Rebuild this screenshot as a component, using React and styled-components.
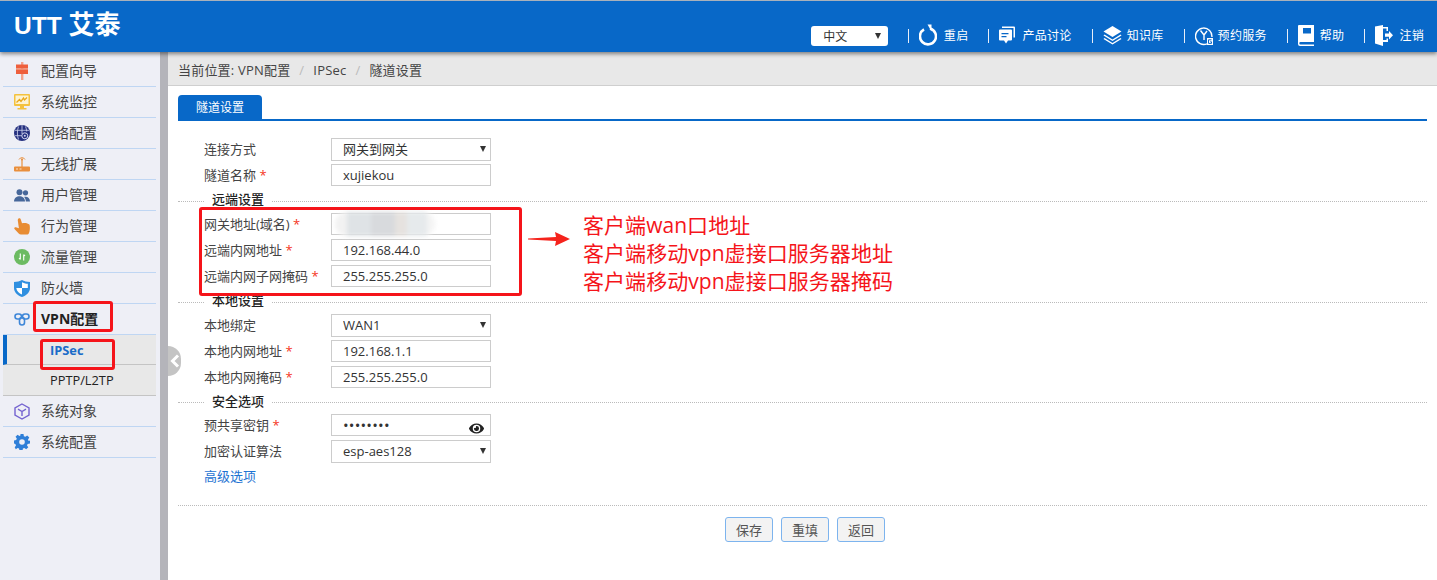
import React from 'react';
import styled, { createGlobalStyle } from 'styled-components';
import { FaEye } from 'react-icons/fa';

const GlobalStyle = createGlobalStyle`
  html, body {
    margin: 0;
    padding: 0;
    background: #fff;
    font-family: "Open Sans", "Noto Sans CJK SC", sans-serif;
    font-size: 13px;
    color: #333;
  }
`;

const RestartIcon = () => (
  <svg width="18" height="22" viewBox="0 0 18 22" fill="none">
    <path d="M5 5.400A8 8 0 1 0 11 4.600" stroke="#fff" strokeWidth="2.600" />
    <path d="M8.500 .5 L12.500 .5 L12.500 7.500 Z" fill="#fff" />
  </svg>
);

const ChatIcon = () => (
  <svg width="16" height="20" viewBox="0 0 16 20">
    <path d="M3 1.500h12a1 1 0 0 1 1 1v10h-1.500v-9.500H3z" fill="#fff" />
    <path d="M1 4.500h11a1 1 0 0 1 1 1v9a1 1 0 0 1-1 1H9l-2 3-2-3H1a1 1 0 0 1-1-1v-9a1 1 0 0 1 1-1z" fill="#fff" />
    <path d="M2.500 8h7v1.300h-7zM2.500 11h5v1.300h-5z" fill="#0868c8" />
  </svg>
);

const BooksIcon = () => (
  <svg width="19" height="20" viewBox="0 0 19 20">
    <path d="M9.500 1L18.500 6.500L9.500 12L.5 6.500z" fill="#fff" />
    <path d="M1.500 9.500L9.500 14.500L17.500 9.500L18.500 10.500L9.500 16L.5 10.500z" fill="#fff" />
    <path d="M1.500 13L9.500 18L17.500 13L18.500 14L9.500 19.500L.5 14z" fill="#fff" />
  </svg>
);

const ServiceIcon = () => (
  <svg width="18" height="21" viewBox="0 0 18 21" fill="none">
    <path d="M12 18.800A8.200 8.200 0 1 1 16.900 12" stroke="#fff" strokeWidth="1.400" />
    <path d="M5.500 5.500L9 10l3-4M9 10v5" stroke="#fff" strokeWidth="1.400" />
    <path d="M12 13h6v7h-6z" fill="#fff" />
    <path d="M16.500 14.800h-3v3.600h3v-1.600h-1.300" stroke="#0868c8" strokeWidth="1" />
  </svg>
);

const HelpIcon = () => (
  <svg width="16" height="21" viewBox="0 0 16 21">
    <path d="M1 0h15v17H2.500a1 1 0 0 0 0 2.400H16V21H2a2 2 0 0 1-2-2V1a1 1 0 0 1 1-1z" fill="#fff" />
    <path d="M5 3h8v5.500H5z" fill="#0868c8" />
  </svg>
);

const LogoutIcon = () => (
  <svg width="18" height="21" viewBox="0 0 18 21">
    <path d="M0 1.500L8 0v21L0 18.500z" fill="#fff" />
    <path d="M8 2h5v4h-1.500V3.500H8zM8 15h3.500v-1.500H13V17H8z" fill="#fff" />
    <path d="M10 8.500h4V6l4 4.200-4 4.200v-2.600h-4z" fill="#fff" />
  </svg>
);

const GuideIcon = () => (
  <svg width="16" height="18" viewBox="0 0 16 18">
    <path d="M7 0h2.400v18H7z" fill="#f3a28c" />
    <path d="M2 2.500h12v4H2zM2 8h12v4H2z" fill="#ee5f3c" />
    <path d="M2 6.500h12V8H2z" fill="#f08c70" />
  </svg>
);

const MonitorIcon = () => (
  <svg width="16" height="16" viewBox="0 0 16 16">
    <path d="M1 0h14a1 1 0 0 1 1 1v10a1 1 0 0 1-1 1H1a1 1 0 0 1-1-1V1a1 1 0 0 1 1-1z" fill="#f4c23f" />
    <path d="M1.500 1.500h13v8.500h-13z" fill="#fdf3d2" />
    <path d="M2.500 8.500L5.500 5.500l1.500 2 2.500-3.500 1 2 2.500-2.500" fill="none" stroke="#e9a81b" strokeWidth="1.300" />
    <path d="M6 12h4v2h2.500v1.500h-9V14H6z" fill="#f4c23f" />
  </svg>
);

const GlobeIcon = () => (
  <svg width="16" height="16" viewBox="0 0 16 16">
    <circle cx="8" cy="8" r="8" fill="#25307f" />
    <path d="M1 5.300h14M1 10.700h8M8 0v9M4.500 1.500c-1.500 4-1.500 9 0 13M11.500 1.500c.7 1.500 1 3 1.200 5" fill="none" stroke="#cfd4ee" strokeWidth=".8" />
    <circle cx="10.800" cy="10.800" r="3" fill="#25307f" stroke="#cfd4ee" strokeWidth="1" />
    <circle cx="10.800" cy="10.800" r="1" fill="#cfd4ee" />
  </svg>
);

const RouterIcon = () => (
  <svg width="16" height="16" viewBox="0 0 16 16">
    <path d="M7.400 3h1.200v8H7.400z" fill="#e98f3d" />
    <path d="M5 3.500a3.400 3.400 0 0 1 6 0" fill="none" stroke="#e98f3d" strokeWidth="1" />
    <circle cx="8" cy="3.500" r="1" fill="#e98f3d" />
    <path d="M1 10.500h14a1 1 0 0 1 1 1v3a1 1 0 0 1-1 1H1a1 1 0 0 1-1-1v-3a1 1 0 0 1 1-1z" fill="#e98f3d" />
    <path d="M2 12.500h2v1H2zM5.500 12.500h2v1h-2z" fill="#fbe3c8" />
  </svg>
);

const UsersIcon = () => (
  <svg width="16" height="13" viewBox="0 0 16 13">
    <circle cx="5.500" cy="3.300" r="3" fill="#47679a" />
    <circle cx="11.500" cy="3.800" r="2.600" fill="#47679a" />
    <path d="M0 12.500c0-7 11-7 11 0z" fill="#47679a" />
    <path d="M11.800 12.500h4.200c0-3.800-3-5.400-6-4.500 1.200 1 1.800 2.600 1.800 4.500z" fill="#47679a" />
  </svg>
);

const HandIcon = () => (
  <svg width="16" height="17" viewBox="0 0 16 17">
    <path d="M4.500.5c1 -.6 2 0 2.300 1L8 5.300c2-.8 6-.5 7.300 1.200.9 1.400.7 6 -.3 8.500-.4 1-1.200 1.500-2.200 1.500H7c-1 0-1.700-.3-2.300-1L.5 11c-.7-.8.3-2 1.400-1.700l3 1L3.800 2.400c-.1-.8.100-1.500.7-1.900z" fill="#e88c33" />
  </svg>
);

const FlowIcon = () => (
  <svg width="16" height="16" viewBox="0 0 16 16">
    <circle cx="8" cy="8" r="8" fill="#6cbb62" />
    <path d="M6.300 4.500v6M6.300 10.500l-1.300-1.500M9.700 11.500v-6M9.700 5.500l1.300 1.500" stroke="#fff" strokeWidth="1.100" fill="none" />
  </svg>
);

const ShieldIcon = () => (
  <svg width="16" height="17" viewBox="0 0 16 17">
    <path d="M8 0c2 1.300 5 2 8 2v6c0 4.500-4 7.700-8 9-4-1.300-8-4.500-8-9V2c3 0 6-.7 8-2z" fill="#2f8fe0" />
    <path d="M8 2.200c1.500.9 3.500 1.400 5.800 1.600V8H8zM8 8v6.600C5.200 13.500 2.600 11.200 2.300 8z" fill="#fff" />
  </svg>
);

const VpnIcon = () => (
  <svg width="16" height="13" viewBox="0 0 16 13" fill="none" stroke="#3e86d8" strokeWidth="1.600">
    <rect x="1" y="1" width="6.500" height="5" rx="2.500" />
    <rect x="8.500" y="1" width="6.500" height="5" rx="2.500" />
    <rect x="5.500" y="4.500" width="5" height="7.500" rx="2.500" />
  </svg>
);

const CubeIcon = () => (
  <svg width="16" height="17" viewBox="0 0 16 17" fill="none" stroke="#7463d0" strokeWidth="1.400">
    <path d="M8 1l7 3.800v7.400L8 16l-7-3.800V4.800z" />
    <path d="M4 6.200L8 8.500l4-2.300M8 8.500V13" />
  </svg>
);

const GearIcon = () => (
  <svg width="16" height="16" viewBox="0 0 16 16">
    <path
      d="M6.500 0h3l.4 2.200 1.500.6 1.800-1.300 2.100 2.100-1.300 1.800.6 1.500L16 6.500v3l-2.400.4-.6 1.500 1.300 1.800-2.100 2.100-1.800-1.300-1.500.6-.4 2.400h-3l-.4-2.400-1.500-.6-1.800 1.300L.7 13.200 2 11.400l-.6-1.500L0 9.500v-3l2.200-.4.600-1.500L1.500 2.800 3.600.7l1.800 1.300 1-.4z"
      fill="#2f7fd8"
    />
    <circle cx="8" cy="8" r="2.800" fill="#eeeff6" />
  </svg>
);

const menu = [
  { label: '配置向导', icon: <GuideIcon /> },
  { label: '系统监控', icon: <MonitorIcon /> },
  { label: '网络配置', icon: <GlobeIcon /> },
  { label: '无线扩展', icon: <RouterIcon /> },
  { label: '用户管理', icon: <UsersIcon /> },
  { label: '行为管理', icon: <HandIcon /> },
  { label: '流量管理', icon: <FlowIcon /> },
  { label: '防火墙', icon: <ShieldIcon /> },
  { label: 'VPN配置', icon: <VpnIcon />, active: true },
];

const navItems = [
  { label: '重启', icon: <RestartIcon />, gap: 6.5 },
  { label: '产品讨论', icon: <ChatIcon />, gap: 7 },
  { label: '知识库', icon: <BooksIcon /> },
  { label: '预约服务', icon: <ServiceIcon /> },
  { label: '帮助', icon: <HelpIcon />, gap: 6 },
  { label: '注销', icon: <LogoutIcon />, gap: 6 },
];

const Field = ({ label, required, children }) => (
  <Row>
    <Label>
      {label}
      {required && <Star> *</Star>}
    </Label>
    {children}
  </Row>
);

const Select = ({ value }) => (
  <SelectWrap>
    <SelectBox defaultValue={value}>
      <option>{value}</option>
    </SelectBox>
  </SelectWrap>
);

const App = () => {
  return (
    <Page>
      <GlobalStyle />
      <Header>
        <Logo>UTT <LogoCn>艾泰</LogoCn></Logo>
        <HeaderNav>
          <LangWrap>
            <LangSelect defaultValue="中文">
              <option>中文</option>
            </LangSelect>
          </LangWrap>
          {navItems.map((item) => (
            <NavItem key={item.label} $gap={item.gap}>
              {item.icon}
              <span>{item.label}</span>
            </NavItem>
          ))}
        </HeaderNav>
      </Header>

      <Body>
        <Sidebar>
          {menu.map((item) => (
            <MenuItem key={item.label} $active={item.active}>
              <MenuIcon>{item.icon}</MenuIcon>
              {item.label}
            </MenuItem>
          ))}
          <SubItem $active>IPSec</SubItem>
          <SubItem>PPTP/L2TP</SubItem>
          <MenuItem>
            <MenuIcon><CubeIcon /></MenuIcon>
            系统对象
          </MenuItem>
          <MenuItem>
            <MenuIcon><GearIcon /></MenuIcon>
            系统配置
          </MenuItem>
        </Sidebar>
        <Gutter>
          <Collapse>
            <svg width="10" height="14" viewBox="0 0 10 14" fill="none">
              <path d="M8 1.500L2.500 7 8 12.500" stroke="#fff" strokeWidth="3" />
            </svg>
          </Collapse>
        </Gutter>

        <Main>
          <Breadcrumb>
            <span>当前位置: VPN配置</span>
            <Sep>/</Sep>
            <span>IPSec</span>
            <Sep>/</Sep>
            <span>隧道设置</span>
          </Breadcrumb>
          <Content>
            <Tabs>
              <Tab>隧道设置</Tab>
            </Tabs>
            <Form>
              <Field label="连接方式"><Select value="网关到网关" /></Field>
              <Field label="隧道名称" required><Input defaultValue="xujiekou" /></Field>

              <Legend><span>远端设置</span></Legend>
              <Field label="网关地址(域名)" required>
                <InputWrap>
                  <Input defaultValue="" />
                  <Blur />
                </InputWrap>
              </Field>
              <Field label="远端内网地址" required><Input defaultValue="192.168.44.0" /></Field>
              <Field label="远端内网子网掩码" required><Input defaultValue="255.255.255.0" /></Field>

              <Legend><span>本地设置</span></Legend>
              <Field label="本地绑定"><Select value="WAN1" /></Field>
              <Field label="本地内网地址" required><Input defaultValue="192.168.1.1" /></Field>
              <Field label="本地内网掩码" required><Input defaultValue="255.255.255.0" /></Field>

              <Legend $height={22}><span>安全选项</span></Legend>
              <Field label="预共享密钥" required>
                <InputWrap>
                  <Input type="password" defaultValue="12345678" />
                  <Eye><FaEye size={15} /></Eye>
                </InputWrap>
              </Field>
              <Field label="加密认证算法"><Select value="esp-aes128" /></Field>
              <AdvancedLink>高级选项</AdvancedLink>
            </Form>
            <Footer>
              <Button>保存</Button>
              <Button>重填</Button>
              <Button>返回</Button>
            </Footer>
          </Content>
        </Main>
      </Body>

      <RedBox $x={33} $y={301} $w={80} $h={31} />
      <RedBox $x={40} $y={339} $w={75} $h={31} />
      <RedBox $x={199} $y={207} $w={323} $h={89} />
      <Arrow viewBox="0 0 42 14" width="42" height="14">
        <path d="M0 6.500L28 5 27 0 42 7 27 14 28 9 0 7.500z" fill="#f5231c" />
      </Arrow>
      <Note>
        <div>客户端wan口地址</div>
        <div>客户端移动vpn虚接口服务器地址</div>
        <div>客户端移动vpn虚接口服务器掩码</div>
      </Note>
    </Page>
  );
};

const Page = styled.div`
  position: relative;
  height: 580px;
  overflow: hidden;
  display: flex;
  flex-direction: column;
`;

const Header = styled.header`
  position: relative;
  z-index: 2;
  flex: none;
  box-sizing: border-box;
  height: 52px;
  border-top: 1px solid #a9b1bb;
  padding: 0 13px 0 14px;
  display: flex;
  justify-content: space-between;
  background: #0868c8;
  box-shadow: 0 2px 4px rgba(0, 0, 0, 0.45);
`;

const Logo = styled.div`
  margin-top: 8px;
  font-family: "Liberation Sans", "Noto Sans CJK SC", sans-serif;
  font-size: 24.500px;
  line-height: 32px;
  font-weight: 700;
  color: #fff;
`;

const LogoCn = styled.span`
  font-size: 26px;
`;

const HeaderNav = styled.nav`
  margin-top: 21px;
  display: flex;
  align-items: center;
  gap: 20px;
  height: 26px;
  color: #fff;
  font-size: 12px;
  letter-spacing: 0.3px;
`;

const LangWrap = styled.div`
  position: relative;
  width: 77px;
  height: 20px;
  margin-top: 2px;

  &::after {
    content: '';
    position: absolute;
    right: 7px;
    top: 7px;
    border: 3.5px solid transparent;
    border-top: 6px solid #333;
    border-bottom: 0;
  }
`;

const LangSelect = styled.select`
  appearance: none;
  width: 100%;
  height: 100%;
  border: 0;
  border-radius: 3px;
  padding: 0 0 0 12px;
  background: #fff;
  color: #333;
  font: inherit;
`;

const NavItem = styled.div`
  display: flex;
  align-items: center;
  gap: ${(p) => p.$gap || 5}px;
  padding-left: 11px;
  height: 22px;
  position: relative;

  &::before {
    content: '';
    position: absolute;
    left: 0;
    top: 5px;
    height: 14px;
    border-left: 1px solid #e8eef8;
  }
`;

const Body = styled.div`
  flex: 1;
  display: flex;
  min-height: 0;
  padding-top: 4px;
  background: #e8e8e8;
`;

const Sidebar = styled.aside`
  flex: none;
  box-sizing: border-box;
  width: 160px;
  margin-top: -4px;
  padding: 4px 4px 0 3px;
  background: #eeeff6;
`;

const MenuItem = styled.div`
  box-sizing: border-box;
  height: 31px;
  padding-bottom: 2px;
  display: flex;
  align-items: center;
  border-bottom: 1px solid #bfd6f3;
  font-size: 14px;
  font-weight: ${(p) => (p.$active ? 700 : 400)};
  color: ${(p) => (p.$active ? '#222' : '#444')};
`;

const MenuIcon = styled.span`
  flex: none;
  display: flex;
  justify-content: center;
  width: 16px;
  margin: 2px 11px 0;
`;

const SubItem = styled.div`
  box-sizing: border-box;
  height: ${(p) => (p.$active ? 30 : 31)}px;
  padding-left: ${(p) => (p.$active ? 43 : 47)}px;
  padding-top: ${(p) => (p.$active ? 1 : 0)}px;
  display: flex;
  align-items: center;
  background: #e8e8e8;
  border-left: ${(p) => (p.$active ? '4px solid #0868c8' : '0')};
  border-bottom: 1px solid #c4c4c4;
  font-size: 12.800px;
  font-weight: ${(p) => (p.$active ? 700 : 400)};
  color: ${(p) => (p.$active ? '#1a6cc8' : '#222')};
`;

const Gutter = styled.div`
  position: relative;
  z-index: 1;
  flex: none;
  width: 8px;
  margin-top: -4px;
  background: #b4b4ba;
`;

const Collapse = styled.div`
  position: absolute;
  left: 8px;
  top: 294px;
  width: 13px;
  height: 30px;
  display: flex;
  align-items: center;
  justify-content: center;
  border-radius: 0 15px 15px 0;
  background: #c4c4c4;
`;

const Main = styled.main`
  flex: 1;
  min-width: 0;
  display: flex;
  flex-direction: column;
  background: #fff;
`;

const Breadcrumb = styled.div`
  flex: none;
  box-sizing: border-box;
  height: 30px;
  padding: 0 0 2px 10px;
  display: flex;
  align-items: center;
  background: #e8e8e8;
  border-bottom: 1px solid #cfcfcf;
  color: #444;
  letter-spacing: 0.2px;
`;

const Sep = styled.span`
  margin: 0 9px;
  color: #bbb;
`;

const Content = styled.div`
  flex: 1;
  padding: 9px 10px 0;
`;

const Tabs = styled.div`
  display: flex;
  height: 26px;
  box-sizing: border-box;
  border-bottom: 2px solid #0868c8;
`;

const Tab = styled.div`
  width: 84px;
  height: 24px;
  display: flex;
  align-items: center;
  justify-content: center;
  border-radius: 4px 4px 0 0;
  background: #0868c8;
  color: #fff;
  font-size: 12px;
`;

const Form = styled.form`
  padding-top: 15px;
  height: 385px;
  box-sizing: border-box;
  border-bottom: 1px dotted #bbb;
`;

const Row = styled.div`
  height: 26px;
  padding-left: 26px;
  display: flex;
  align-items: center;
`;

const Label = styled.label`
  flex: none;
  width: 127px;
  padding-bottom: 2px;
  color: #444;
`;

const Star = styled.span`
  color: #f5341c;
`;

const Input = styled.input`
  box-sizing: border-box;
  width: 160px;
  height: 22px;
  padding: 0 11px;
  border: 1px solid #ccc;
  outline: none;
  background: #fff;
  color: #333;
  font: inherit;

  &[type='password'] {
    font-size: 15px;
    letter-spacing: 0.2px;
  }
`;

const InputWrap = styled.div`
  position: relative;
  display: flex;
`;

const Blur = styled.div`
  position: absolute;
  left: 4px;
  top: -1px;
  width: 100px;
  height: 24px;
  border-radius: 12px;
  background: linear-gradient(90deg, #f2f2f2 0 12%, #dfe3e6 12% 36%, #d8dadd 36% 60%, #e6e2df 60% 72%, #e6eaec 72% 92%, #f4f4f4 92%);
  filter: blur(2px);
`;

const Eye = styled.span`
  position: absolute;
  right: 7px;
  bottom: 0;
  display: flex;
  color: #222;
`;

const SelectWrap = styled.div`
  position: relative;
  width: 160px;
  height: 23px;

  &::after {
    content: '';
    position: absolute;
    right: 5px;
    top: 8px;
    border: 3px solid transparent;
    border-top: 6px solid #333;
    border-bottom: 0;
  }
`;

const SelectBox = styled.select`
  appearance: none;
  box-sizing: border-box;
  width: 100%;
  height: 100%;
  padding: 0 0 0 11px;
  border: 1px solid #ccc;
  border-radius: 0;
  outline: none;
  background: #fff;
  color: #333;
  font: inherit;
`;

const Legend = styled.div`
  height: ${(p) => p.$height || 23}px;
  display: flex;
  align-items: center;
  gap: 8px;
  font-weight: 500;
  color: #222;

  span {
    margin-top: -2px;
  }

  &::before {
    content: '';
    width: 26px;
    margin-top: 3px;
    border-top: 1px dotted #bbb;
  }

  &::after {
    content: '';
    flex: 1;
    margin-top: 3px;
    border-top: 1px dotted #bbb;
  }
`;

const AdvancedLink = styled.a`
  display: block;
  margin-left: 26px;
  margin-top: -1px;
  line-height: 26px;
  color: #1e73d2;
`;

const Footer = styled.div`
  padding: 11px 0 0 5px;
  display: flex;
  justify-content: center;
  gap: 8px;
`;

const Button = styled.button`
  box-sizing: border-box;
  width: 48px;
  height: 25px;
  padding: 0;
  border: 1px solid #7db4ee;
  border-radius: 3px;
  background: #f3f3f3;
  color: #555;
  font: inherit;
`;

const RedBox = styled.div`
  position: absolute;
  left: ${(p) => p.$x}px;
  top: ${(p) => p.$y}px;
  width: ${(p) => p.$w}px;
  height: ${(p) => p.$h}px;
  box-sizing: border-box;
  border: 3px solid #f5141a;
  border-radius: 3px;
  z-index: 3;
`;

const Arrow = styled.svg`
  position: absolute;
  left: 528px;
  top: 232px;
`;

const Note = styled.div`
  position: absolute;
  left: 583px;
  top: 211px;
  font-size: 21px;
  letter-spacing: 0.05px;
  line-height: 28px;
  color: #f5141a;
  white-space: nowrap;
`;

export default App;
